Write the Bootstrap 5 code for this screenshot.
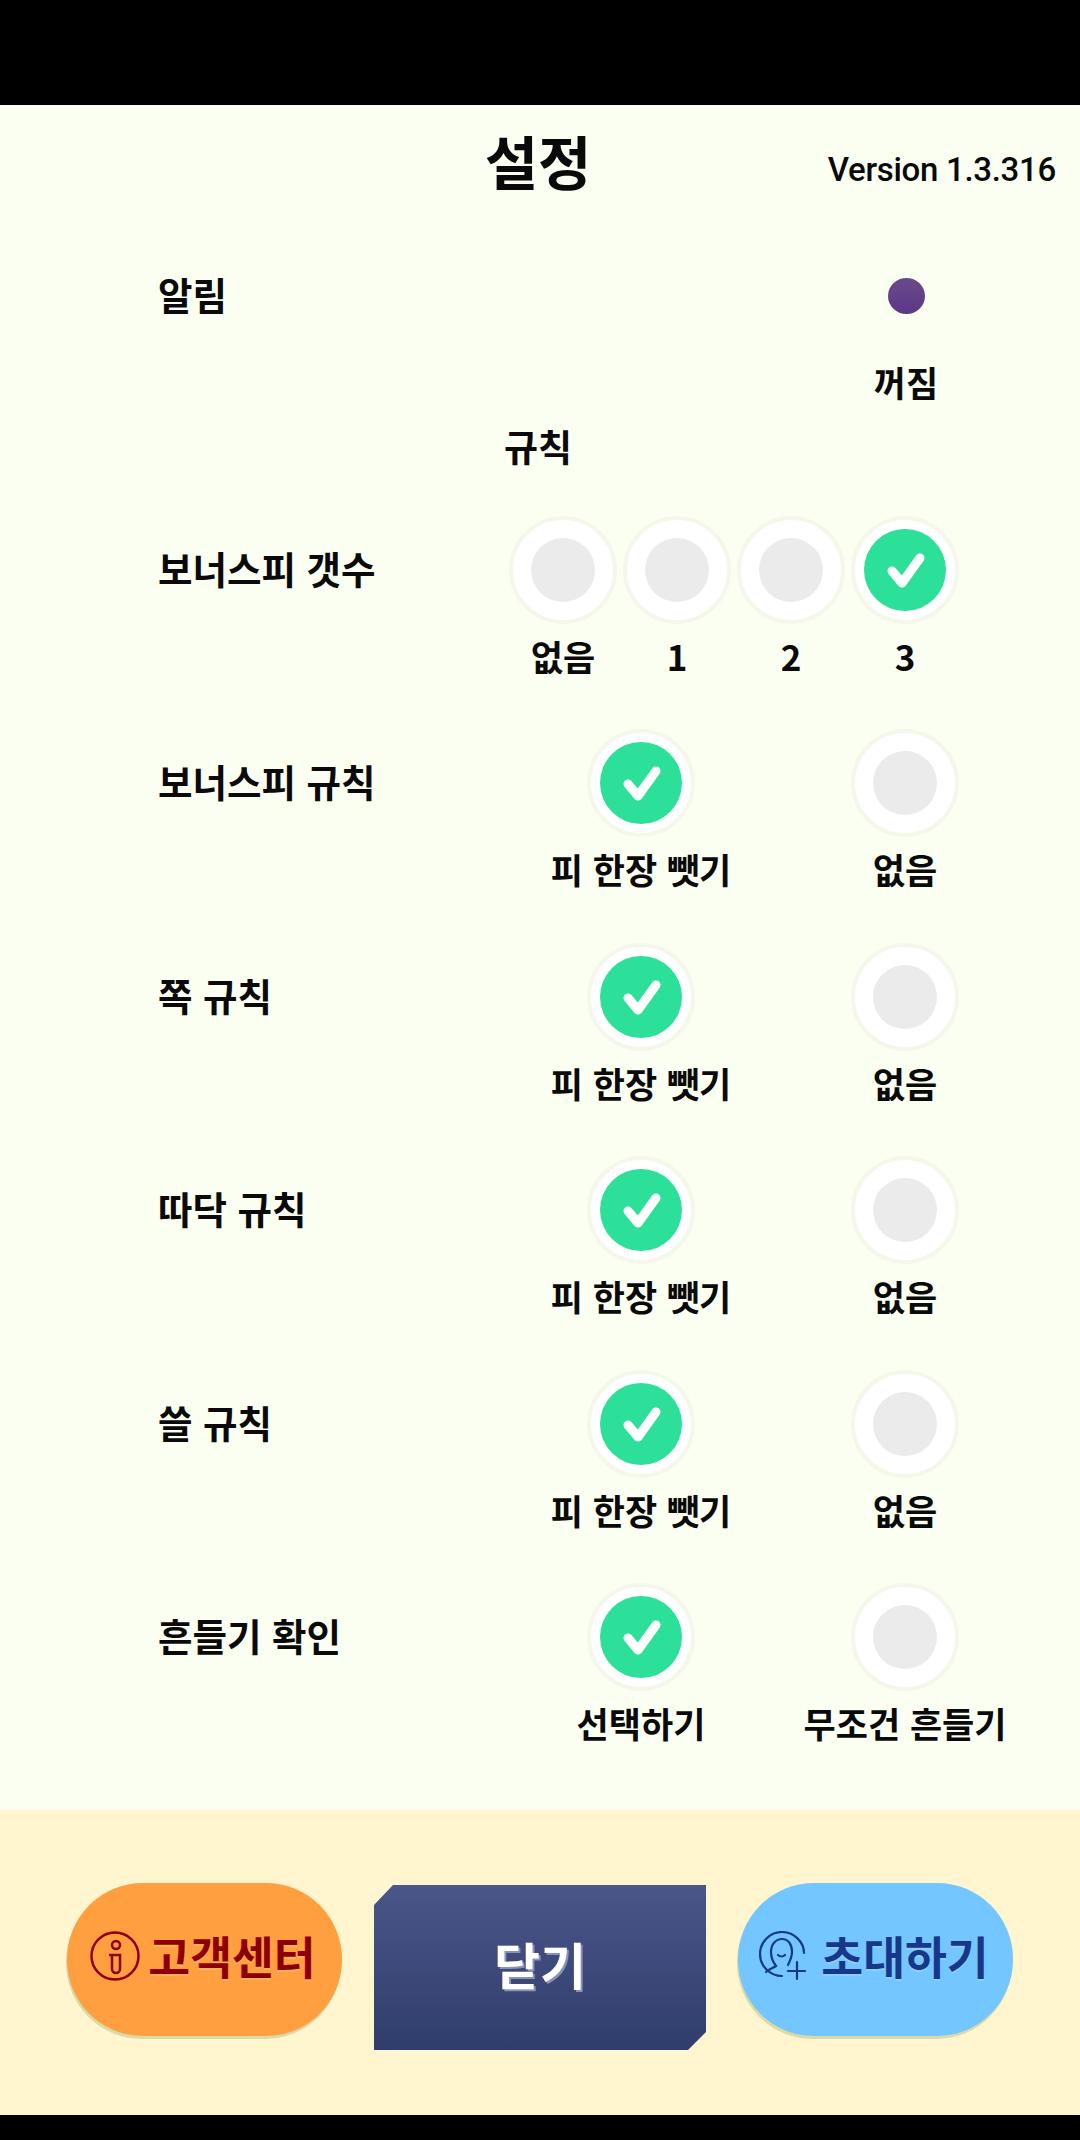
<!DOCTYPE html>
<html lang="ko">
<head>
  <meta charset="UTF-8">
  <title>설정</title>
  <link href="https://cdn.jsdelivr.net/npm/bootstrap@5.3.0/dist/css/bootstrap.min.css" rel="stylesheet">
  <style>
    body { background: #000; font-family: "Noto Sans CJK KR", "Noto Sans", sans-serif; font-weight: 700; color: #0a0a0a; }
    .screen { width: 1080px; height: 2140px; }
    .bar-top { height: 105px; background: #000; }
    .bar-bottom { height: 25px; background: #000; }
    .panel { height: 1705px; background: #fbfff1; }
    .foot { height: 305px; background: #fff5cf; padding: 73px 0 0 67px; gap: 32px; }

    .head-row { height: 118px; margin-bottom: 19px; }
    .head-gap { width: 400px; }
    .head-title { width: 276px; font-size: 58px; font-weight: 700; line-height: 110px; text-align: center; margin: 0; }
    .head-ver { flex: 1; font-family: Roboto, sans-serif; font-weight: 500; font-size: 33px; letter-spacing: -.3px; line-height: 130px; text-align: right; padding-right: 24px; }

    .set-row { height: 213.4px; padding-left: 158px; }
    .set-row.alarm-row { height: 181px; }
    .set-name { width: 351px; font-size: 37.5px; line-height: 104px; white-space: nowrap; flex-shrink: 0; }
    .alarm-row .set-name { width: 694px; }
    .rule-title { width: 1076px; text-align: center; font-size: 37px; line-height: 46px; height: 93px; }
    .opt-cell { width: 264px; flex-shrink: 0; }
    .opt-four { margin-left: -3px; }
    .opt-four .opt-cell { width: 114px; }
    .opt-cap { font-size: 35px; line-height: 50px; margin-top: 7px; white-space: nowrap; text-align: center; }
    .opt-ring { width: 108px; height: 108px; border-radius: 50%; background: #fff; border: 4px solid #f5f7eb; }
    .opt-off { width: 64px; height: 64px; border-radius: 50%; background: #ebebeb; }
    .opt-on { width: 82px; height: 82px; border-radius: 50%; background: #2de09a; }
    .alarm-cell { width: 108px; }
    .alarm-dot { width: 37px; height: 36px; border-radius: 50%; background: linear-gradient(#6a4a8a, #5c3787); }

    .pill-btn { width: 275px; height: 153px; border: 0; border-radius: 76px; font-size: 45.5px; font-weight: 700; gap: 8px; box-shadow: -1px 3px 0 #dcd9a8; padding: 0 3px 8px 0; text-shadow: 0 2px 0 rgba(255, 255, 255, .2); }
    .pill-help, .pill-help:hover { background: #ff9f3f; color: #8f0000; }
    .pill-invite, .pill-invite:hover { background: #73c6ff; color: #17378a; gap: 12px; }
    .close-btn, .close-btn:hover { width: 332px; height: 165px; margin-top: 2px; border: 0; border-radius: 0; padding: 0 0 8px 0; font-size: 50px; font-weight: 700; color: #fff; background: linear-gradient(#4a5688, #2f3d6c); clip-path: polygon(19px 0, 100% 0, 100% 147px, 314px 100%, 0 100%, 0 20px); text-shadow: 2px 2px 0 #8a93b5; }
  </style>
</head>
<body>
  <div class="screen d-flex flex-column">
    <div class="bar-top"></div>
    <main class="panel">
      <div class="d-flex head-row">
        <div class="head-gap"></div>
        <h1 class="head-title">설정</h1>
        <div class="head-ver">Version 1.3.316</div>
      </div>

      <div class="d-flex set-row alarm-row">
        <div class="set-name">알림</div>
        <div class="alarm-cell d-flex flex-column align-items-center">
          <div class="d-flex align-items-center justify-content-center opt-ring border-0 bg-transparent"><div class="alarm-dot"></div></div>
          <div class="opt-cap">꺼짐</div>
        </div>
      </div>

      <div class="rule-title">규칙</div>

      <div class="d-flex set-row">
        <div class="set-name">보너스피 갯수</div>
        <div class="d-flex opt-four">
          <div class="opt-cell d-flex flex-column align-items-center">
            <div class="opt-ring d-flex align-items-center justify-content-center"><div class="opt-off"></div></div>
            <div class="opt-cap">없음</div>
          </div>
          <div class="opt-cell d-flex flex-column align-items-center">
            <div class="opt-ring d-flex align-items-center justify-content-center"><div class="opt-off"></div></div>
            <div class="opt-cap">1</div>
          </div>
          <div class="opt-cell d-flex flex-column align-items-center">
            <div class="opt-ring d-flex align-items-center justify-content-center"><div class="opt-off"></div></div>
            <div class="opt-cap">2</div>
          </div>
          <div class="opt-cell d-flex flex-column align-items-center">
            <div class="opt-ring d-flex align-items-center justify-content-center"><div class="opt-on"><svg width="82" height="82" viewBox="0 0 82 82"><path d="M28 42 38 54 56 29" fill="none" stroke="#fff" stroke-width="9" stroke-linecap="round" stroke-linejoin="round"/></svg></div></div>
            <div class="opt-cap">3</div>
          </div>
        </div>
      </div>

      <div class="d-flex set-row">
        <div class="set-name">보너스피 규칙</div>
        <div class="opt-cell d-flex flex-column align-items-center">
          <div class="opt-ring d-flex align-items-center justify-content-center"><div class="opt-on"><svg width="82" height="82" viewBox="0 0 82 82"><path d="M28 42 38 54 56 29" fill="none" stroke="#fff" stroke-width="9" stroke-linecap="round" stroke-linejoin="round"/></svg></div></div>
          <div class="opt-cap">피 한장 뺏기</div>
        </div>
        <div class="opt-cell d-flex flex-column align-items-center">
          <div class="opt-ring d-flex align-items-center justify-content-center"><div class="opt-off"></div></div>
          <div class="opt-cap">없음</div>
        </div>
      </div>

      <div class="d-flex set-row">
        <div class="set-name">쪽 규칙</div>
        <div class="opt-cell d-flex flex-column align-items-center">
          <div class="opt-ring d-flex align-items-center justify-content-center"><div class="opt-on"><svg width="82" height="82" viewBox="0 0 82 82"><path d="M28 42 38 54 56 29" fill="none" stroke="#fff" stroke-width="9" stroke-linecap="round" stroke-linejoin="round"/></svg></div></div>
          <div class="opt-cap">피 한장 뺏기</div>
        </div>
        <div class="opt-cell d-flex flex-column align-items-center">
          <div class="opt-ring d-flex align-items-center justify-content-center"><div class="opt-off"></div></div>
          <div class="opt-cap">없음</div>
        </div>
      </div>

      <div class="d-flex set-row">
        <div class="set-name">따닥 규칙</div>
        <div class="opt-cell d-flex flex-column align-items-center">
          <div class="opt-ring d-flex align-items-center justify-content-center"><div class="opt-on"><svg width="82" height="82" viewBox="0 0 82 82"><path d="M28 42 38 54 56 29" fill="none" stroke="#fff" stroke-width="9" stroke-linecap="round" stroke-linejoin="round"/></svg></div></div>
          <div class="opt-cap">피 한장 뺏기</div>
        </div>
        <div class="opt-cell d-flex flex-column align-items-center">
          <div class="opt-ring d-flex align-items-center justify-content-center"><div class="opt-off"></div></div>
          <div class="opt-cap">없음</div>
        </div>
      </div>

      <div class="d-flex set-row">
        <div class="set-name">쓸 규칙</div>
        <div class="opt-cell d-flex flex-column align-items-center">
          <div class="opt-ring d-flex align-items-center justify-content-center"><div class="opt-on"><svg width="82" height="82" viewBox="0 0 82 82"><path d="M28 42 38 54 56 29" fill="none" stroke="#fff" stroke-width="9" stroke-linecap="round" stroke-linejoin="round"/></svg></div></div>
          <div class="opt-cap">피 한장 뺏기</div>
        </div>
        <div class="opt-cell d-flex flex-column align-items-center">
          <div class="opt-ring d-flex align-items-center justify-content-center"><div class="opt-off"></div></div>
          <div class="opt-cap">없음</div>
        </div>
      </div>

      <div class="d-flex set-row">
        <div class="set-name">흔들기 확인</div>
        <div class="opt-cell d-flex flex-column align-items-center">
          <div class="opt-ring d-flex align-items-center justify-content-center"><div class="opt-on"><svg width="82" height="82" viewBox="0 0 82 82"><path d="M28 42 38 54 56 29" fill="none" stroke="#fff" stroke-width="9" stroke-linecap="round" stroke-linejoin="round"/></svg></div></div>
          <div class="opt-cap">선택하기</div>
        </div>
        <div class="opt-cell d-flex flex-column align-items-center">
          <div class="opt-ring d-flex align-items-center justify-content-center"><div class="opt-off"></div></div>
          <div class="opt-cap">무조건 흔들기</div>
        </div>
      </div>
    </main>

    <footer class="foot d-flex align-items-start">
      <button class="btn pill-btn pill-help d-flex align-items-center justify-content-center">
        <svg width="50" height="50" viewBox="0 0 50 50" fill="none" stroke="#8f0000" stroke-width="2.5">
          <circle cx="25" cy="25" r="23.5"/>
          <circle cx="26" cy="14" r="4"/>
          <path d="M19 24h11v14a4 4 0 0 1-8 0V24"/>
        </svg>
        <span>고객센터</span>
      </button>
      <button class="btn close-btn">닫기</button>
      <button class="btn pill-btn pill-invite d-flex align-items-center justify-content-center">
        <svg width="50" height="50" viewBox="0 0 50 50" fill="none" stroke="#17378a" stroke-width="2.2" stroke-linecap="round">
          <path d="M23 45C11 45 1 35 1 23S11 1 23 1s22 10 22 21"/>
          <path d="M7 41c3-3 7-4 10-6-3-4-5-9-5-14 0-8 5-13 11-13s10 5 10 13c0 5-2 9-4 13"/>
          <path d="M19 24c2 2 5 2 7 0"/>
          <path d="M38 31v17M29 40h17"/>
        </svg>
        <span>초대하기</span>
      </button>
    </footer>
    <div class="bar-bottom"></div>
  </div>
  <script src="https://cdn.jsdelivr.net/npm/bootstrap@5.3.0/dist/js/bootstrap.bundle.min.js"></script>
</body>
</html>
